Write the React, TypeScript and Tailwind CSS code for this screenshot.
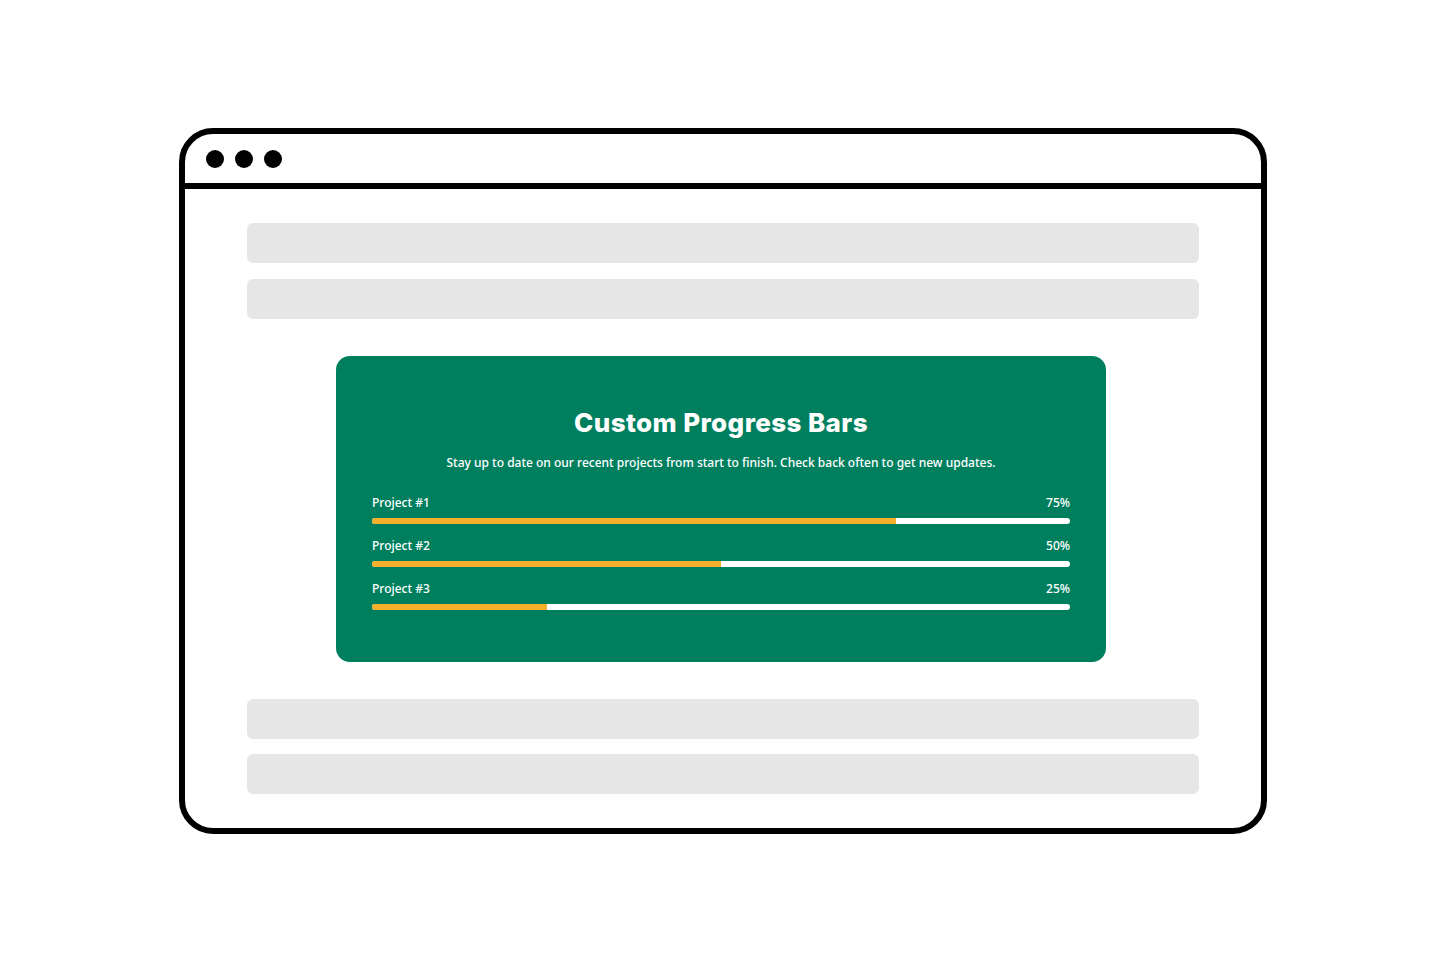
import React from 'react';

type Project = { name: string; value: number };

const projects: Project[] = [
  { name: 'Project #1', value: 75 },
  { name: 'Project #2', value: 50 },
  { name: 'Project #3', value: 25 },
];

const Placeholder = () => <div className="h-10 w-full rounded-md bg-[#e6e6e6]" />;

const ProgressRow = ({ project }: { project: Project }) => (
  <div className="flex flex-col">
    <div className="flex items-center justify-between text-[12px] leading-[18px] font-medium text-white">
      <span>{project.name}</span>
      <span>{project.value}%</span>
    </div>
    <div className="mt-[6px] h-[6px] w-full overflow-hidden rounded-full bg-white">
      <div className="h-full bg-[#f6ae2d]" style={{ width: `${project.value}%` }} />
    </div>
  </div>
);

export default function App() {
  return (
    <div className="min-h-[963px] w-full bg-white pl-[179px] pt-[128px]">
      <div className="flex h-[706px] w-[1088px] flex-col overflow-hidden rounded-[34px] border-[6px] border-black bg-white">
        {/* window chrome */}
        <div className="flex h-[55px] items-center gap-[11px] border-b-[6px] border-black pl-[21px]">
          <span className="h-[18px] w-[18px] rounded-full bg-black" />
          <span className="h-[18px] w-[18px] rounded-full bg-black" />
          <span className="h-[18px] w-[18px] rounded-full bg-black" />
        </div>

        <div className="flex flex-col px-[62px] pt-[34px]">
          <div className="flex flex-col gap-4">
            <Placeholder />
            <Placeholder />
          </div>

          <div
            className="my-[37px] ml-[89px] w-[770px] rounded-[14px] bg-[#007f5f] px-9 pb-[52px] pt-[51px]"
            style={{ fontFamily: '"Noto Sans", "Open Sans", sans-serif' }}
          >
            <h1
              className="text-center text-[26px] leading-8 font-extrabold tracking-[0.4px] text-white"
              style={{ fontFamily: 'Inter, "Liberation Sans", sans-serif' }}
            >
              Custom Progress Bars
            </h1>
            <p className="mt-[15px] text-center text-[12px] leading-[18px] font-medium text-white">
              Stay up to date on our recent projects from start to finish. Check back often to get new updates.
            </p>
            <div className="mt-[22px] flex flex-col gap-[13px]">
              {projects.map((p) => (
                <ProgressRow key={p.name} project={p} />
              ))}
            </div>
          </div>

          <div className="flex flex-col gap-[15px]">
            <Placeholder />
            <Placeholder />
          </div>
        </div>
      </div>
    </div>
  );
}
